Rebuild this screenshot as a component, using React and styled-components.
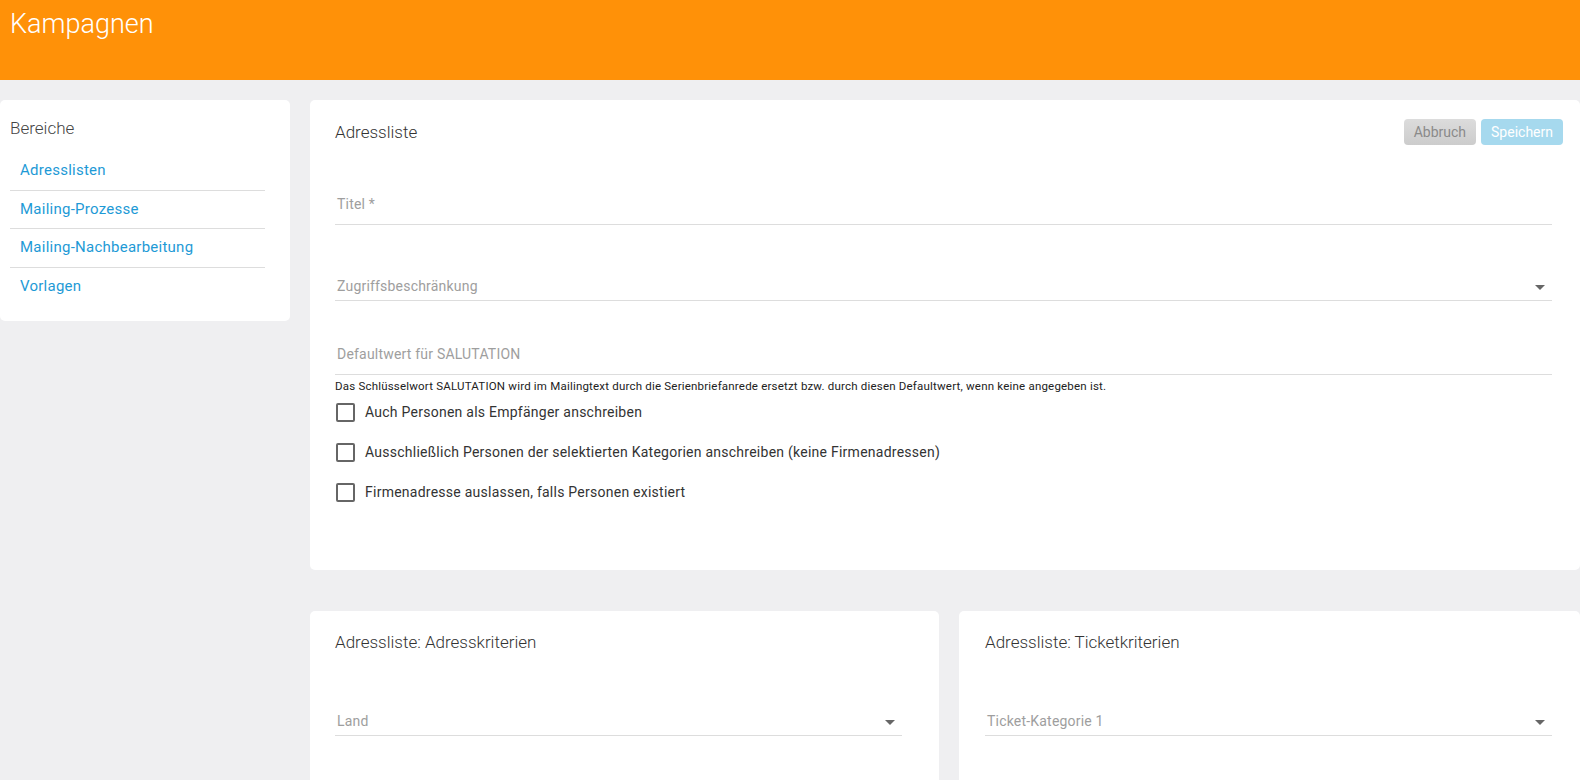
import React from 'react'
import styled, { createGlobalStyle } from 'styled-components'

const GlobalStyle = createGlobalStyle`
    * {
        box-sizing: border-box;
    }

    body {
        margin: 0;
        background-color: #EFEFF1;
        font-family: Roboto, "Liberation Sans", sans-serif;
        overflow: hidden;
    }
`

const Header = styled.header`
    background-color: #FF9108;
    height: 80px;
    padding: 8px 10px;

    h1 {
        color: #fff;
        font-size: 27px;
        font-weight: 300;
        margin: 0;
    }
`

const Body = styled.div`
    display: flex;
    gap: 20px;
    padding-top: 20px;
    width: 1580px;
`

const Sidebar = styled.aside`
    align-self: flex-start;
    background-color: #fff;
    border-radius: 5px;
    flex: 0 0 290px;
    padding: 18px 25px 15px 10px;

    h3 {
        color: #444;
        font-size: 17px;
        font-weight: 300;
        line-height: 20px;
        margin: 0 0 14px;
    }
`

const NavItem = styled.a`
    border-bottom: ${({ $last }) => ($last ? 'none' : '1px solid #DDD')};
    color: #1E9AD6;
    display: block;
    font-size: 15px;
    height: 38.5px;
    letter-spacing: 0.25px;
    line-height: 37px;
    padding-left: 10px;
    text-decoration: none;
`

const Main = styled.main`
    display: flex;
    flex: 1;
    flex-direction: column;
`

const Card = styled.section`
    background-color: #fff;
    border-radius: 5px;
    padding: ${({ $padding }) => $padding};
    width: ${({ $width }) => $width || 'auto'};
    height: ${({ $height }) => $height || 'auto'};
`

const CardHead = styled.div`
    align-items: center;
    display: flex;
    height: 26px;
    justify-content: space-between;
    margin-right: -11px;
`

const Heading = styled.h2`
    color: #333;
    font-size: 17px;
    font-weight: 300;
    line-height: 22px;
    margin: 0;
`

const Buttons = styled.div`
    display: flex;
    gap: 5px;
`

const Button = styled.button`
    background: ${({ $primary }) => ($primary ? '#A6D9EE' : 'linear-gradient(#DCDCDC, #CCCCCC)')};
    border: none;
    border-radius: 4px;
    color: ${({ $primary }) => ($primary ? '#fff' : '#8A8A8A')};
    font-family: Roboto, "Liberation Sans", sans-serif;
    font-size: 14px;
    height: 26px;
    padding: 0 10px;
`

const Field = styled.div`
    align-items: center;
    border-bottom: 1px solid #DDD;
    display: flex;
    justify-content: space-between;
    margin-top: ${({ $top }) => $top}px;
    padding-bottom: ${({ $select }) => ($select ? 4 : 10)}px;
    padding-left: 2px;

    span {
        color: #9E9E9E;
        font-size: 14px;
        letter-spacing: 0.2px;
        line-height: 20px;
    }
`

const Arrow = styled.i`
    border-left: 5px solid transparent;
    border-right: 5px solid transparent;
    border-top: 5px solid #666;
    margin-right: 7px;
    margin-top: 2px;
`

const Help = styled.p`
    color: #222;
    font-size: 11.5px;
    letter-spacing: 0.2px;
    line-height: 12px;
    margin: 5px 0 0;
`

const CheckRow = styled.label`
    align-items: center;
    color: #333;
    display: flex;
    font-size: 14px;
    gap: 10px;
    height: 40px;
    letter-spacing: 0.25px;
    padding-left: 1px;
`

const Box = styled.span`
    border: 2px solid #666;
    border-radius: 2px;
    height: 19px;
    width: 19px;
`

const Row = styled.div`
    display: flex;
    gap: 20px;
    margin-top: 41px;
`

const nav = ['Adresslisten', 'Mailing-Prozesse', 'Mailing-Nachbearbeitung', 'Vorlagen']

const checks = [
    'Auch Personen als Empfänger anschreiben',
    'Ausschließlich Personen der selektierten Kategorien anschreiben (keine Firmenadressen)',
    'Firmenadresse auslassen, falls Personen existiert',
]

const App = () => {
    return (
        <>
            <GlobalStyle />

            <Header>
                <h1>Kampagnen</h1>
            </Header>

            <Body>

                <Sidebar>
                    <h3>Bereiche</h3>
                    {nav.map((item, index) => (
                        <NavItem key={item} href='#' $last={index === nav.length - 1}>{item}</NavItem>
                    ))}
                </Sidebar>

                <Main>

                    <Card $padding='19px 28px 58px 25px'>
                        <CardHead>
                            <Heading>Adressliste</Heading>
                            <Buttons>
                                <Button type='button'>Abbruch</Button>
                                <Button type='button' $primary>Speichern</Button>
                            </Buttons>
                        </CardHead>

                        <Field $top={49}>
                            <span>Titel *</span>
                        </Field>

                        <Field $top={51} $select>
                            <span>Zugriffsbeschränkung</span>
                            <Arrow />
                        </Field>

                        <Field $top={43}>
                            <span>Defaultwert für SALUTATION</span>
                        </Field>
                        <Help>Das Schlüsselwort SALUTATION wird im Mailingtext durch die Serienbriefanrede ersetzt bzw. durch diesen Defaultwert, wenn keine angegeben ist.</Help>

                        {checks.map((text) => (
                            <CheckRow key={text}>
                                <Box />
                                {text}
                            </CheckRow>
                        ))}
                    </Card>

                    <Row>
                        <Card $padding='20px 37px 0 25px' $width='629px' $height='220px'>
                            <Heading>Adressliste: Adresskriterien</Heading>
                            <Field $top={58} $select>
                                <span>Land</span>
                                <Arrow />
                            </Field>
                        </Card>

                        <Card $padding='20px 28px 0 26px' $width='621px' $height='220px'>
                            <Heading>Adressliste: Ticketkriterien</Heading>
                            <Field $top={58} $select>
                                <span>Ticket-Kategorie 1</span>
                                <Arrow />
                            </Field>
                        </Card>
                    </Row>

                </Main>

            </Body>
        </>
    )
}

export default App
